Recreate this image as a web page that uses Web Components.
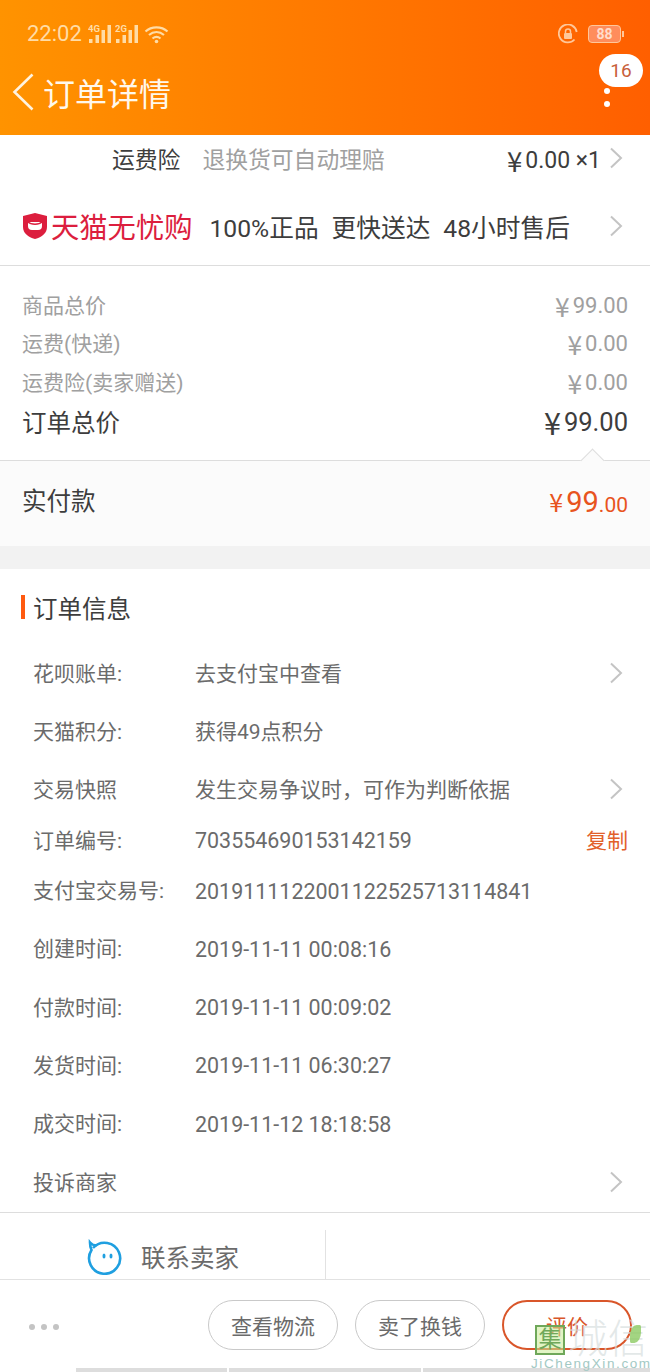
<!DOCTYPE html>
<html lang="zh">
<head>
<meta charset="utf-8">
<title>订单详情</title>
<style>
  html, body { margin: 0; padding: 0; background: #fff; }
  body {
    width: 650px;
    height: 1372px;
    overflow: hidden;
    position: relative;
    font-family: Roboto, "Noto Sans CJK SC", sans-serif;
    color: #3d3d3d;
  }
</style>
</head>
<body>

<template id="chevron-tpl">
  <svg width="14" height="22" viewBox="0 0 14 22" fill="none" stroke="#c4c4c4" stroke-width="2"><path d="M2 1.500 12 11 2 20.500"/></svg>
</template>

<app-header title="订单详情" badge="16"></app-header>

<promo-row style="--h:55px">
  <shipping-line></shipping-line>
</promo-row>
<tmall-line></tmall-line>

<price-panel>
  <price-line label="商品总价" value="99.00" gap="25"></price-line>
  <price-line label="运费(快递)" value="0.00" gap="8"></price-line>
  <price-line label="运费险(卖家赠送)" value="0.00" gap="9"></price-line>
  <price-line label="订单总价" value="99.00" gap="10" strong></price-line>
</price-panel>
<pay-band></pay-band>

<info-section heading="订单信息">
  <info-row label="花呗账单:" value="去支付宝中查看" h="58" arrow></info-row>
  <info-row label="天猫积分:" value="获得49点积分" h="58"></info-row>
  <info-row label="交易快照" value="发生交易争议时，可作为判断依据" h="58" arrow></info-row>
  <info-row label="订单编号:" value="703554690153142159" h="43" copy></info-row>
  <info-row label="支付宝交易号:" value="2019111122001122525713114841" h="58"></info-row>
  <info-row label="创建时间:" value="2019-11-11 00:08:16" h="58.4"></info-row>
  <info-row label="付款时间:" value="2019-11-11 00:09:02" h="58.4"></info-row>
  <info-row label="发货时间:" value="2019-11-11 06:30:27" h="58.4"></info-row>
  <info-row label="成交时间:" value="2019-11-12 18:18:58" h="58.4"></info-row>
  <info-row label="投诉商家" value="" h="58.4" arrow></info-row>
</info-section>

<contact-bar></contact-bar>

<action-bar>
  <action-btn>查看物流</action-btn>
  <action-btn>卖了换钱</action-btn>
  <action-btn primary>评价</action-btn>
</action-bar>

<site-mark></site-mark>

<script>
const chevron = () => document.getElementById('chevron-tpl').innerHTML

const signal = (net) => `
  <svg width="24" height="20" viewBox="0 0 24 20" fill="#ffdca6"><text x="0" y="8" font-size="9.500" font-weight="700" font-family="Roboto">${net}</text><rect x="1" y="15" width="3.500" height="4"/><rect x="7.500" y="11" width="3.500" height="8"/><rect x="13.500" y="6" width="3.500" height="13"/><rect x="19.500" y="1" width="3.500" height="18"/></svg>`

class AppHeader extends HTMLElement {
  connectedCallback() {
    this.attachShadow({ mode: 'open' })
    this.shadowRoot.innerHTML = `
      <style>
        :host {
          display: block; height: 135px; color: #fff;
          background: linear-gradient(90deg, #ff9300, #ff5f00);
        }
        .status { height: 68px; display: flex; align-items: center; padding: 0 29px 0 27px; box-sizing: border-box; }
        .time { font-size: 22px; color: #ffdca6; line-height: 68px; margin-right: 6px; }
        .status svg { display: block; margin-right: 3px; }
        .right { margin-left: auto; display: flex; align-items: center; gap: 7px; }
        .bat { width: 33px; height: 18px; box-sizing: border-box; border: 1px solid #ffc79a; border-radius: 4px;
               background: #ff8d5c; font-size: 14px; font-weight: 700; line-height: 16px; text-align: center; color: #ffdccc; position: relative; }
        .bat::after { content: ""; position: absolute; right: -4px; top: 5px; width: 2px; height: 6px; background: #ffc79a; }
        .nav { display: flex; align-items: center; height: 67px; position: relative; }
        .back { margin: -20px 0 0 12px; display: block; }
        h1 { margin: -14px 0 0 9px; font-size: 32px; font-weight: 400; color: #fff8ec; line-height: 48px; }
        .badge { position: absolute; left: 599px; top: -14px; width: 44px; height: 33px; border-radius: 17px; background: #fff;
                 color: #c8603a; font-size: 19px; line-height: 33px; text-align: center; }
        .dot { position: absolute; left: 604px; width: 6px; height: 6px; border-radius: 50%; background: #fff; }
      </style>
      <div class="status">
        <span class="time">22:02</span>
        ${signal('4G')}
        ${signal('2G')}
        <svg style="margin-left:2px" width="25" height="19" viewBox="0 0 25 19" fill="none" stroke="#ffdca6" stroke-width="2.200"><path d="M1.500 6.500C7.500 1 17.500 1 23.500 6.500M5 10c4.500-4 10.500-4 15 0M8.500 13.500c2.500-2 5.500-2 8 0"/><circle cx="12.500" cy="16.500" r="1.800" fill="#ffdca6" stroke="none"/></svg>
        <div class="right">
          <svg width="20" height="20" viewBox="0 0 20 20" fill="none"><path d="M16.500 15.500A9 9 0 1 1 18.700 8" stroke="#ffc79a" stroke-width="1.800"/><rect x="6" y="9" width="8" height="6" rx="1" fill="#ffc79a"/><path d="M7.500 9V7.500a2.500 2.500 0 0 1 5 0V9" stroke="#ffc79a" stroke-width="1.500"/></svg>
          <div class="bat">88</div>
        </div>
      </div>
      <div class="nav">
        <svg class="back" width="22" height="38" viewBox="0 0 22 38" fill="none" stroke="#fff3e0" stroke-width="2.600"><path d="M20.500 1.500 2.500 19l18 17.500"/></svg>
        <h1>${this.getAttribute('title')}</h1>
        <div class="badge">${this.getAttribute('badge')}</div>
        <span class="dot" style="top:20px"></span>
        <span class="dot" style="top:33px"></span>
      </div>`
  }
}

class PromoRow extends HTMLElement {
  constructor() {
    super()
    this.attachShadow({ mode: 'open' })
    this.shadowRoot.innerHTML = `
      <style>:host { display: block; height: var(--h); }</style>
      <slot></slot>`
  }
}

class ShippingLine extends HTMLElement {
  constructor() {
    super()
    this.attachShadow({ mode: 'open' })
    this.shadowRoot.innerHTML = `
      <style>
        :host { display: flex; align-items: center; height: 50px; padding: 0 27px 0 112px; font-size: 22.800px; color: #3d3d3d; }
        .zh, svg { margin-bottom: 4px; }
        .sub { color: #a0a0a0; margin-left: 22px; }
        .fee { margin-left: auto; font-size: 23px; margin-right: 8px; display: flex; align-items: center; }
        .y { font-family: "Noto Sans CJK SC", sans-serif; font-size: 1.200em; margin-right: 3px; }
      </style>
      <span class="zh">运费险</span><span class="zh sub">退换货可自动理赔</span><span class="fee"><span class="y">¥</span>0.00 ×1</span>${chevron()}`
  }
}

class TmallLine extends HTMLElement {
  constructor() {
    super()
    this.attachShadow({ mode: 'open' })
    this.shadowRoot.innerHTML = `
      <style>
        :host { display: flex; align-items: center; box-sizing: border-box; height: 76px; padding: 0 27px 4px 22px; border-bottom: 1px solid #ddd; font-size: 24.700px; color: #3d3d3d; }
        svg.logo { display: block; margin-right: 3px; }
        .brand { font-size: 28.300px; color: #dc1e3e; margin-right: 17px; }
        .t { margin-right: 13px; white-space: nowrap; }
        .arrow { margin-left: auto; display: flex; }
      </style>
      <svg class="logo" width="26" height="28" viewBox="0 0 26 28"><path d="M13 1 25 4v11c0 6-5 10-12 12C6 25 1 21 1 15V4z" fill="#dc1e3e"/><path d="M6 10h14v4a4 4 0 0 1-4 4h-6a4 4 0 0 1-4-4z" fill="#fff"/><path d="M6 10c3 3 11 3 14 0" fill="none" stroke="#dc1e3e" stroke-width="1.500"/></svg>
      <span class="brand">天猫无忧购</span>
      <span class="t">100%正品</span><span class="t">更快送达</span><span class="t">48小时售后</span>
      <span class="arrow">${chevron()}</span>`
  }
}

class PricePanel extends HTMLElement {
  constructor() {
    super()
    this.attachShadow({ mode: 'open' })
    this.shadowRoot.innerHTML = `
      <style>:host { display: flex; flex-direction: column; height: 194px; padding: 0 22px; }</style>
      <slot></slot>`
  }
}

class PriceLine extends HTMLElement {
  connectedCallback() {
    const strong = this.hasAttribute('strong')
    this.attachShadow({ mode: 'open' })
    this.shadowRoot.innerHTML = `
      <style>
        :host { display: flex; justify-content: space-between; align-items: center; height: 30px; flex: none;
                margin-top: ${this.getAttribute('gap')}px;
                font-size: ${strong ? '24.500px' : '21px'}; color: ${strong ? '#3d3d3d' : '#a0a0a0'}; }
        .k { margin-bottom: 4px; }
        .v { font-size: ${strong ? '25.500px' : '22px'}; margin-bottom: 2px; display: flex; align-items: center; }
        .y { font-family: "Noto Sans CJK SC", sans-serif; font-size: 1.200em; margin-right: 3px; }
      </style>
      <span class="k">${this.getAttribute('label')}</span><span class="v"><span class="y">¥</span>${this.getAttribute('value')}</span>`
  }
}

class PayBand extends HTMLElement {
  constructor() {
    super()
    this.attachShadow({ mode: 'open' })
    this.shadowRoot.innerHTML = `
      <style>
        :host { display: block; position: relative; }
        .band { height: 86px; box-sizing: border-box; border-top: 1px solid #ddd; background: #fbfbfb; display: flex; align-items: center;
                justify-content: space-between; padding: 0 22px 6px; font-size: 24.500px; color: #3d3d3d; }
        .band > span:first-child { margin-bottom: 2px; }
        .notch { position: absolute; left: 584px; top: -8px; width: 17px; height: 17px; background: #fbfbfb;
                 border: solid #ddd; border-width: 1px 0 0 1px; box-sizing: border-box; transform: rotate(45deg); }
        .amt { color: #e8541e; display: flex; align-items: baseline; }
        .y { font-size: 25px; font-family: "Noto Sans CJK SC", sans-serif; margin-right: 3px; }
        .i { font-size: 29px; }
        .d { font-size: 21px; }
        .gap { height: 23px; background: #f2f2f2; }
      </style>
      <div class="notch"></div>
      <div class="band"><span>实付款</span><span class="amt"><span class="y">¥</span><span class="i">99</span><span class="d">.00</span></span></div>
      <div class="gap"></div>`
  }
}

class InfoSection extends HTMLElement {
  connectedCallback() {
    this.attachShadow({ mode: 'open' })
    this.shadowRoot.innerHTML = `
      <style>
        :host { display: block; height: 643px; border-bottom: 1px solid #ddd; }
        h2 { margin: 0; height: 76px; display: flex; align-items: center; font-size: 24.500px; font-weight: 400; color: #3d3d3d; padding-left: 21px; }
        h2 i { width: 4px; height: 24px; background: #ff5a10; margin-right: 8px; }
      </style>
      <h2><i></i>${this.getAttribute('heading')}</h2>
      <slot></slot>`
  }
}

class InfoRow extends HTMLElement {
  connectedCallback() {
    this.attachShadow({ mode: 'open' })
    const end = this.hasAttribute('arrow') ? chevron() : this.hasAttribute('copy') ? '<span class="copy">复制</span>' : ''
    const value = this.getAttribute('value')
    const num = /^[\d\s:-]+$/.test(value) ? 'num' : ''
    this.shadowRoot.innerHTML = `
      <style>
        :host { display: flex; align-items: center; height: ${this.getAttribute('h')}px; padding: 0 22px 0 33px; font-size: 21px; color: #6b6b6b; }
        .k { width: 162px; flex: none; white-space: nowrap; margin-bottom: 4px; }
        .v { white-space: nowrap; margin-bottom: 4px; }
        .v.num { font-size: 21.450px; margin-bottom: 0; }
        svg { margin-left: auto; margin-right: 5px; margin-bottom: 2px; }
        .copy { margin-left: auto; color: #e2602a; margin-bottom: 4px; }
      </style>
      <span class="k">${this.getAttribute('label')}</span><span class="v ${num}">${value}</span>${end}`
  }
}

class ContactBar extends HTMLElement {
  constructor() {
    super()
    this.attachShadow({ mode: 'open' })
    this.shadowRoot.innerHTML = `
      <style>
        :host { display: grid; grid-template-columns: 326px 1fr; height: 66px; border-bottom: 1px solid #e2e2e2; }
        .c { display: flex; align-items: center; margin-top: 17px; padding: 4px 0 0 87px; font-size: 24.500px; color: #6b6b6b; border-right: 1px solid #e2e2e2; }
        svg { margin-right: 18px; display: block; }
      </style>
      <div class="c">
        <svg width="36" height="36" viewBox="0 0 36 36" fill="none"><path d="M6 9A15.500 15.500 0 1 1 4.500 11C3 8 3 6 3 3.500c2 2.500 4 3 7 3" stroke="#1f9fe0" stroke-width="2.600"/><ellipse cx="17" cy="17" rx="1.500" ry="2.500" fill="#1f9fe0"/><ellipse cx="24" cy="17" rx="1.500" ry="2.500" fill="#1f9fe0"/></svg>
        <span>联系卖家</span>
      </div><div></div>`
  }
}

class ActionBar extends HTMLElement {
  constructor() {
    super()
    this.attachShadow({ mode: 'open' })
    this.shadowRoot.innerHTML = `
      <style>
        :host { display: block; height: 92px; }
        .row { height: 88px; box-sizing: border-box; display: flex; align-items: flex-start; gap: 17px; padding: 20px 18px 0 29px; }
        .more { display: flex; gap: 6px; margin: 24px auto 0 0; }
        .more i { width: 6px; height: 6px; border-radius: 50%; background: #c4c4c4; }
        .stripes { display: grid; grid-template-columns: 151px 192px 1fr; gap: 2px; height: 4px; padding-left: 76px; }
        .stripes i { background: #ddd; }
      </style>
      <div class="row"><div class="more"><i></i><i></i><i></i></div><slot></slot></div>
      <div class="stripes"><i></i><i></i><i></i></div>`
  }
}

class ActionBtn extends HTMLElement {
  constructor() {
    super()
    this.attachShadow({ mode: 'open' })
    this.shadowRoot.innerHTML = `
      <style>
        :host { display: flex; align-items: center; justify-content: center; width: 130px; height: 50px; box-sizing: border-box;
                border: 1px solid #c9c9c9; border-radius: 25px; font-size: 21px; color: #6b6b6b; }
        :host([primary]) { border: 2px solid #d9562a; color: #d9562a; }
      </style>
      <slot></slot>`
  }
}

class SiteMark extends HTMLElement {
  constructor() {
    super()
    this.attachShadow({ mode: 'open' })
    this.shadowRoot.innerHTML = `
      <style>
        :host { position: absolute; left: 531px; top: 1322px; width: 119px; height: 50px; pointer-events: none; }
        .box { position: absolute; left: 4px; top: 3px; width: 30px; height: 30px; box-sizing: border-box; border: 2px solid #6fa85a;
               background: rgba(200,235,150,.55); color: #6fa85a; font-size: 23px; line-height: 25px; text-align: center; }
        .name { position: absolute; left: 37px; top: -6px; font-size: 40px; line-height: 48px; font-weight: 300; color: rgba(215,222,222,.7); white-space: nowrap; }
        .leaf { position: absolute; left: 99px; top: 3px; width: 11px; height: 18px; border-radius: 60% 10% 60% 10%; background: #8ccb63; opacity: .8; }
        .url { position: absolute; left: 0; top: 34px; font-family: "Liberation Sans", sans-serif; font-size: 13.500px; letter-spacing: 1.600px; color: #a3c9c4; white-space: nowrap; }
      </style>
      <span class="box">集</span>
      <span class="name">城信</span>
      <span class="leaf"></span>
      <span class="url">JiChengXin.com</span>`
  }
}

customElements.define('app-header', AppHeader)
customElements.define('promo-row', PromoRow)
customElements.define('shipping-line', ShippingLine)
customElements.define('tmall-line', TmallLine)
customElements.define('price-panel', PricePanel)
customElements.define('price-line', PriceLine)
customElements.define('pay-band', PayBand)
customElements.define('info-section', InfoSection)
customElements.define('info-row', InfoRow)
customElements.define('contact-bar', ContactBar)
customElements.define('action-bar', ActionBar)
customElements.define('action-btn', ActionBtn)
customElements.define('site-mark', SiteMark)
</script>
</body>
</html>
